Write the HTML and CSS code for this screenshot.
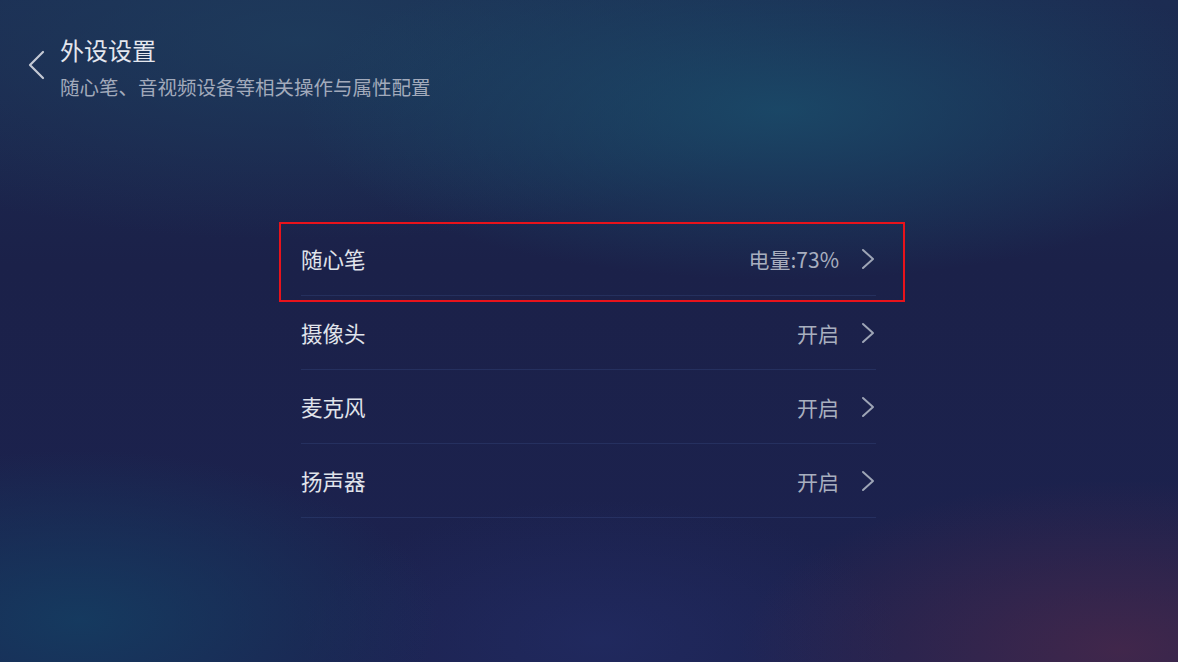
FILE: index.html
```html
<!DOCTYPE html>
<html lang="zh-CN">
<head>
<meta charset="utf-8">
<title>外设设置</title>
<link rel="stylesheet" href="styles.css">
</head>
<body>
<div class="page">
  <header class="header">
    <svg class="back" width="20" height="30" viewBox="0 0 20 30" aria-hidden="true">
      <path d="M17 2 L4 15 L17 28" fill="none" stroke="#c4c9d4" stroke-width="2.2" stroke-linecap="round" stroke-linejoin="round"/>
    </svg>
    <div class="titles">
      <div class="title">外设设置</div>
      <div class="subtitle">随心笔、音视频设备等相关操作与属性配置</div>
    </div>
  </header>
  <main class="list">
    <div class="row selected">
      <span class="label">随心笔</span>
      <span class="value">电量:73%</span>
      <svg class="chev" width="16" height="22" viewBox="0 0 16 22" aria-hidden="true"><path d="M3 2 L13 11 L3 20" fill="none" stroke="#9ea5b6" stroke-width="2" stroke-linecap="round" stroke-linejoin="round"/></svg>
      <div class="focus-box"></div>
    </div>
    <div class="row">
      <span class="label">摄像头</span>
      <span class="value">开启</span>
      <svg class="chev" width="16" height="22" viewBox="0 0 16 22" aria-hidden="true"><path d="M3 2 L13 11 L3 20" fill="none" stroke="#9ea5b6" stroke-width="2" stroke-linecap="round" stroke-linejoin="round"/></svg>
    </div>
    <div class="row">
      <span class="label">麦克风</span>
      <span class="value">开启</span>
      <svg class="chev" width="16" height="22" viewBox="0 0 16 22" aria-hidden="true"><path d="M3 2 L13 11 L3 20" fill="none" stroke="#9ea5b6" stroke-width="2" stroke-linecap="round" stroke-linejoin="round"/></svg>
    </div>
    <div class="row">
      <span class="label">扬声器</span>
      <span class="value">开启</span>
      <svg class="chev" width="16" height="22" viewBox="0 0 16 22" aria-hidden="true"><path d="M3 2 L13 11 L3 20" fill="none" stroke="#9ea5b6" stroke-width="2" stroke-linecap="round" stroke-linejoin="round"/></svg>
    </div>
  </main>
</div>
</body>
</html>
```
FILE: styles.css
```css
html, body {
  margin: 0;
  padding: 0;
}
body {
  background: #1b2149;
  font-family: "Noto Sans CJK SC", "Noto Sans", "Liberation Sans", sans-serif;
}
.page {
  width: 1178px;
  height: 662px;
  overflow: hidden;
  box-sizing: border-box;
  background:
    radial-gradient(ellipse 480px 170px at 780px 110px, rgba(26, 76, 106, 0.85), rgba(26, 76, 106, 0) 100%),
    radial-gradient(ellipse 560px 200px at 300px 40px, rgba(30, 62, 94, 0.8), rgba(30, 62, 94, 0) 100%),
    radial-gradient(ellipse 360px 170px at 80px 620px, rgba(20, 62, 98, 0.85), rgba(20, 62, 98, 0) 100%),
    radial-gradient(ellipse 380px 170px at 1120px 650px, rgba(74, 40, 74, 0.8), rgba(74, 40, 74, 0) 100%),
    radial-gradient(ellipse 300px 140px at 600px 640px, rgba(34, 44, 100, 0.7), rgba(34, 44, 100, 0) 100%),
    linear-gradient(180deg, #1c2c52 0%, #1b2149 40%, #1c2250 100%);
  padding: 35px 0 0 0;
}
.header {
  display: flex;
  align-items: flex-start;
  padding-left: 26px;
}
.back {
  margin-top: 15px;
  margin-right: 14px;
  flex: none;
}
.titles {
  display: flex;
  flex-direction: column;
}
.title {
  font-size: 24px;
  line-height: 30px;
  color: #e4e7ee;
}
.subtitle {
  font-size: 19.5px;
  line-height: 28px;
  margin-top: 8px;
  color: #a2aabb;
}
.list {
  width: 575px;
  margin: 121px 0 0 301px;
}
.row {
  position: relative;
  display: flex;
  align-items: center;
  height: 73px;
  border-bottom: 1px solid rgba(70, 96, 160, 0.24);
}
.label {
  flex: 1;
  font-size: 21.5px;
  color: #e0e4eb;
}
.value {
  font-size: 21px;
  color: #a8afbf;
  margin-right: 21px;
}
.chev {
  flex: none;
  margin-top: 1px;
}
.focus-box {
  position: absolute;
  left: -22px;
  top: 0;
  width: 626px;
  height: 80px;
  box-sizing: border-box;
  border: 2px solid #e8131b;
  pointer-events: none;
}
```
